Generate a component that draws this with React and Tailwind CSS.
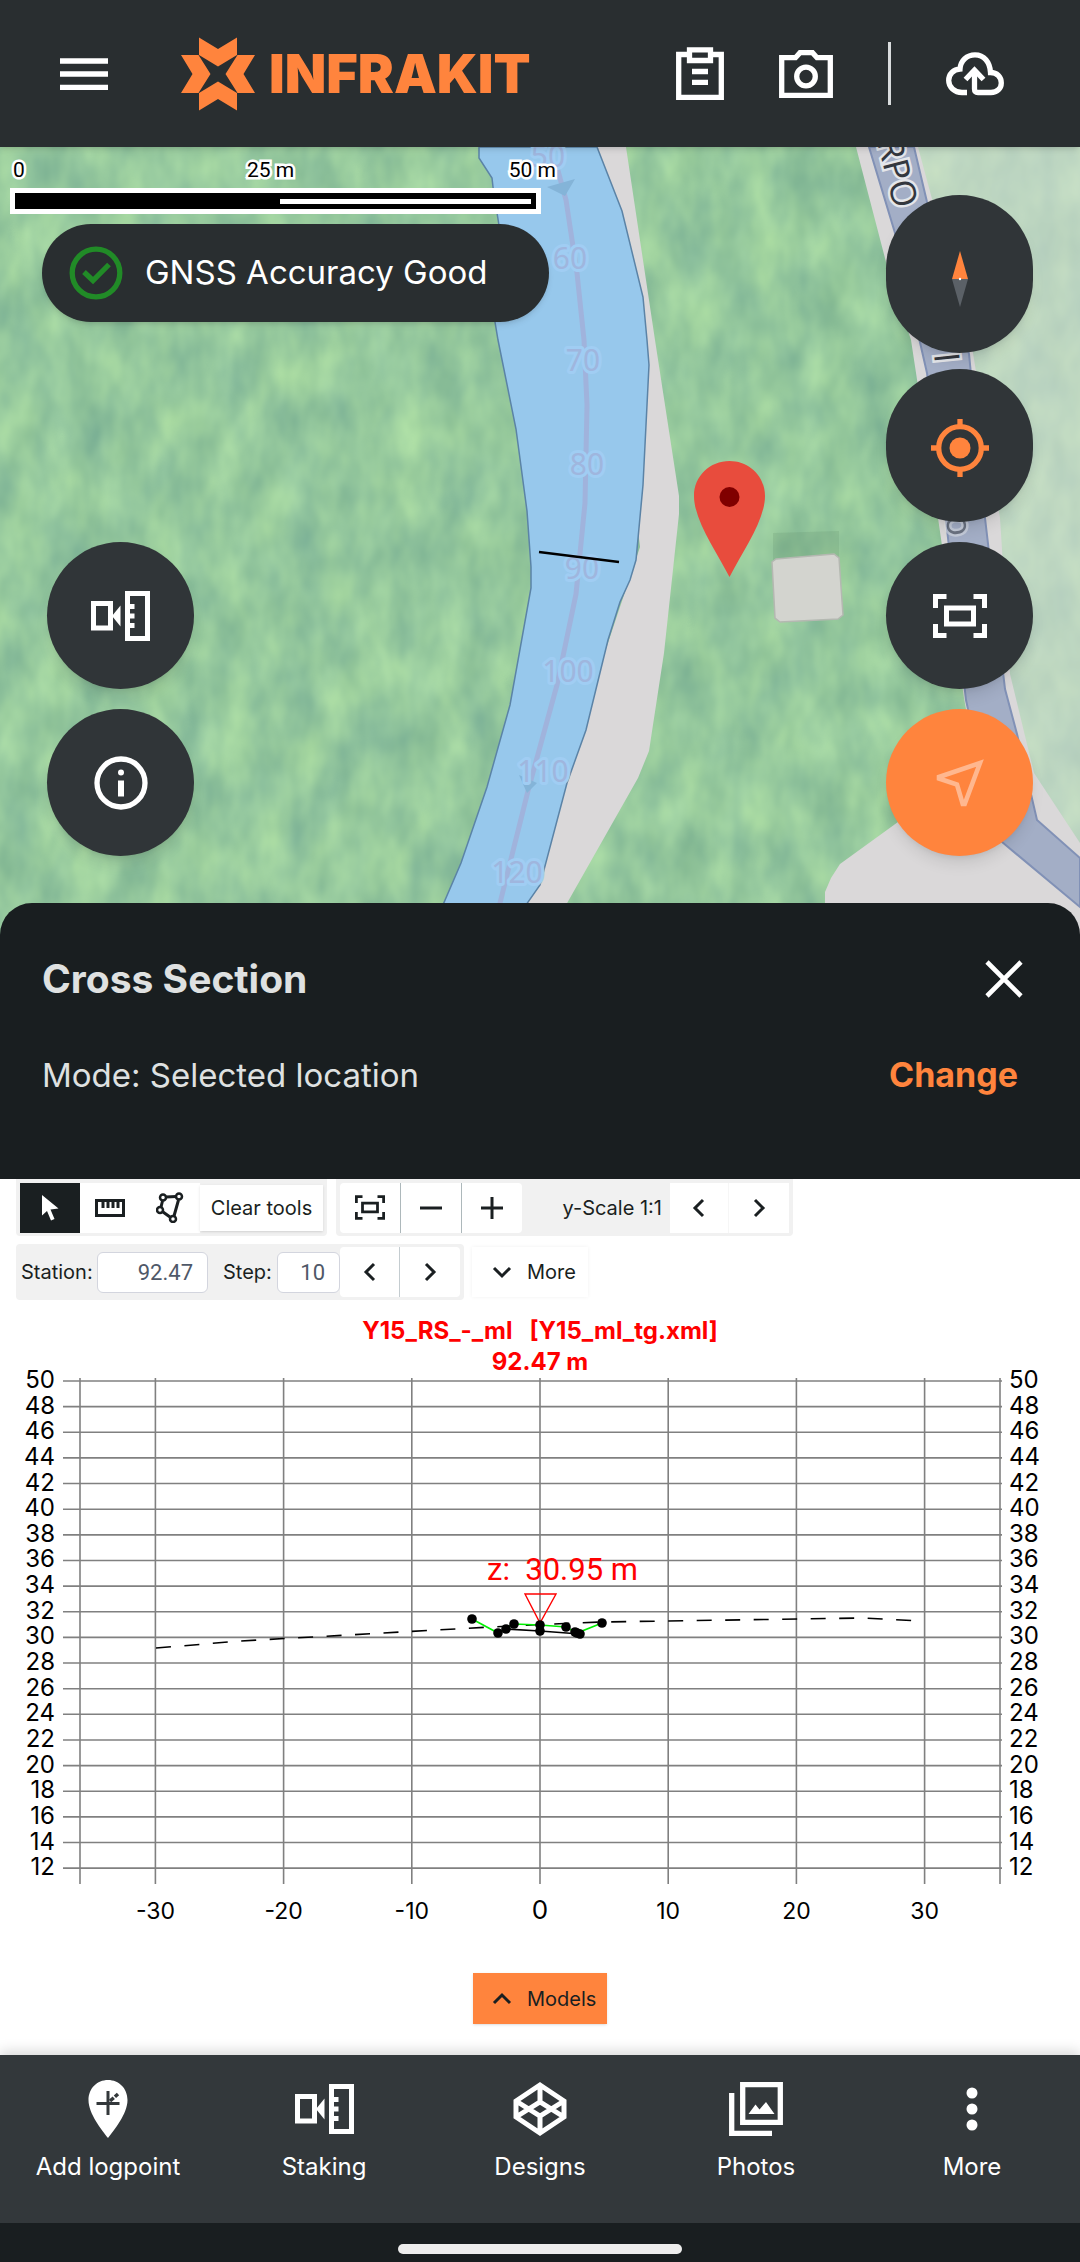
import { useState } from "react";

const NAV_ITEMS = [
  { label: "Add logpoint", icon: LogpointIcon },
  { label: "Staking", icon: StakingIcon },
  { label: "Designs", icon: DesignsIcon },
  { label: "Photos", icon: PhotosIcon },
  { label: "More", icon: DotsIcon },
];

const STATION_LABELS = [
  { x: 548, y: 20, text: "50" },
  { x: 570, y: 122, text: "60" },
  { x: 583, y: 224, text: "70" },
  { x: 587, y: 328, text: "80" },
  { x: 582, y: 432, text: "90" },
  { x: 568, y: 535, text: "100" },
  { x: 543, y: 635, text: "110" },
  { x: 517, y: 736, text: "120" },
];

const LEVELS = Array.from({ length: 20 }, (_, i) => 50 - i * 2);
const OFFSETS = [-30, -20, -10, 0, 10, 20, 30];

const SURFACE = [
  [472, 242], [498, 256], [514, 247], [540, 248], [566, 250], [577, 256], [602, 246],
];
const NODES = [...SURFACE, [506, 252], [540, 254], [575, 255], [580, 257]];

const chartX = (v) => 540 + v * 12.82;
const chartY = (v) => 4 + (50 - v) * 12.82;

function Logo() {
  return (
    <svg width="74" height="74" viewBox="0 0 74 74" fill="#ff843d" aria-hidden="true">
      <path d="M18 0.500 37 12 56 0.500V18L37 29.500 18 18Z" />
      <path d="M18 73.500 37 62 56 73.500V56L37 44.500 18 56Z" />
      <path d="M0 18H17.500L29.500 37 17.500 56H0L11.500 37Z" />
      <path d="M74 18H56.500L44.500 37 56.500 56H74L62.500 37Z" />
    </svg>
  );
}

function MenuIcon() {
  return (
    <svg width="48" height="32" viewBox="0 0 48 32" stroke="#fff" strokeWidth="5.500">
      <path d="M0 3H48M0 16H48M0 29.500H48" />
    </svg>
  );
}

function ClipboardIcon() {
  return (
    <svg width="48" height="54" viewBox="0 0 48 54" fill="none" stroke="#fff" strokeWidth="5.300">
      <path d="M11 7.500H2.700V50.300H45.300V7.500H37M13.500 2.800H34.500V13.500H13.500ZM16 24.500H32M16 35.300H32" />
    </svg>
  );
}

function CameraIcon() {
  return (
    <svg width="54" height="48" viewBox="0 0 54 48" fill="none" stroke="#fff" strokeWidth="5.300">
      <path d="M2.700 7.700H16.500L21 2.700H33.500L38 7.700H51.300V45.300H2.700Z" />
      <circle cx="27" cy="26.500" r="9.300" />
    </svg>
  );
}

function CloudUploadIcon() {
  return (
    <svg width="58" height="44" viewBox="0 0 58 44" fill="none" stroke="#fff" strokeWidth="5.300">
      <path d="M21 40.500H16C8.500 40.500 2.700 35 2.700 28.500C2.700 22 7.500 17.500 14 17C14.500 8.500 21 2.800 29 2.800C38 2.800 44 10 44.500 20.500C51 20.500 55.300 25 55.300 31C55.300 36.500 51 40.500 45 40.500H32Q28.500 40.500 28.500 37V18" />
      <path d="M19.500 27.500 28.500 18 37.500 27.500" />
    </svg>
  );
}

function StakingIcon() {
  return (
    <svg width="59" height="50" viewBox="0 0 59 50" fill="none" stroke="#fff" strokeWidth="5">
      <path d="M2.500 12.500H19.500V37H2.500Z" />
      <path d="M21 25 29.500 14.500V35.500Z" fill="#fff" stroke="none" />
      <path d="M36.500 2.500H56.500V47.500H36.500ZM38 15.500H43.500M38 25H43.500M38 34.500H43.500" />
    </svg>
  );
}

function InfoIcon() {
  return (
    <svg width="54" height="54" viewBox="0 0 54 54" fill="none" stroke="#fff">
      <circle cx="27" cy="27" r="24" strokeWidth="5.300" />
      <path d="M27 24.500V40.500" strokeWidth="6" />
      <circle cx="27" cy="16.500" r="3" fill="#fff" stroke="none" />
    </svg>
  );
}

function CompassIcon() {
  return (
    <svg width="16" height="56" viewBox="0 0 16 56" aria-hidden="true">
      <path d="M8 0 16 28H0Z" fill="#ff843d" />
      <path d="M0 28H16L8 56Z" fill="#5b6167" />
      <circle cx="8" cy="28" r="1.200" fill="#fff" />
    </svg>
  );
}

function TargetIcon() {
  return (
    <svg width="58" height="58" viewBox="0 0 58 58" fill="none" stroke="#ff843d" strokeWidth="5.300">
      <circle cx="29" cy="29" r="21.300" />
      <circle cx="29" cy="29" r="10.500" fill="#ff843d" stroke="none" />
      <path d="M29 0V8M29 50V58M0 29H8M50 29H58" />
    </svg>
  );
}

function FitIcon({ width, height, color }) {
  return (
    <svg width={width} height={height} viewBox="0 0 54 44" fill="none" stroke={color} strokeWidth="5">
      <path d="M2.500 14V2.500H13.500M40.500 2.500H51.500V14M51.500 30V41.500H40.500M13.500 41.500H2.500V30M13.500 14H40.500V30H13.500Z" />
    </svg>
  );
}

function LocateIcon() {
  return (
    <svg width="48" height="48" viewBox="0 0 48 48" fill="none" stroke="#ffb78f" strokeWidth="4.600">
      <path d="M44 4 28.700 45H26.700L21 25.500 3 19.500V18Z" />
    </svg>
  );
}

function LogpointIcon() {
  return (
    <svg width="40" height="60" viewBox="0 0 40 60">
      <path d="M20 1C31 1 39.500 9.500 39.500 21C39.500 35 26 51 20 59C14 51 0.500 35 0.500 21C0.500 9.500 9 1 20 1Z" fill="#fff" />
      <path d="M20 12V36M8.500 24.500H31.500" stroke="#33383b" strokeWidth="3" />
      <path d="M22 22 30 15" stroke="#33383b" strokeWidth="3.500" strokeDasharray="5 1.500" />
    </svg>
  );
}

function DesignsIcon() {
  return (
    <svg width="54" height="56" viewBox="0 0 54 56" fill="none" stroke="#fff" strokeWidth="5">
      <path d="M27 4 51 20V36L27 52 3 36V20ZM27 4V21M27 35V52M3 20 27 35 51 20M3 36 27 21 51 36" />
    </svg>
  );
}

function PhotosIcon() {
  return (
    <svg width="54" height="54" viewBox="0 0 54 54" fill="none" stroke="#fff" strokeWidth="5.300">
      <path d="M13.700 2.700H51.300V40.300H13.700ZM2.700 11V51.300H43" />
      <path d="M19.500 32 26.500 22.500 30.500 27.500 37 20 45.500 32Z" fill="#fff" stroke="none" />
    </svg>
  );
}

function DotsIcon() {
  return (
    <svg width="12" height="44" viewBox="0 0 12 44" fill="#fff">
      <circle cx="6" cy="6" r="5.500" />
      <circle cx="6" cy="22" r="5.500" />
      <circle cx="6" cy="38" r="5.500" />
    </svg>
  );
}

function Chevron({ d }) {
  return (
    <svg width="20" height="20" viewBox="0 0 20 20" fill="none" stroke="#1a1f21" strokeWidth="3">
      <path d={d} />
    </svg>
  );
}

const LEFT = "M14 2 6 10 14 18";
const RIGHT = "M6 2 14 10 6 18";
const DOWN = "M2 6 10 14 18 6";
const UP = "M2 14 10 6 18 14";

function MapCanvas() {
  return (
    <svg
      className="absolute inset-0 h-full w-full"
      viewBox="0 0 1080 788"
      preserveAspectRatio="xMidYMin slice"
      aria-label="Map"
    >
      <defs>
        <filter id="forest" x="0" y="0" width="100%" height="100%" colorInterpolationFilters="sRGB">
          <feTurbulence type="fractalNoise" baseFrequency="0.028 0.016" numOctaves="3" seed="11" />
          <feColorMatrix values="0.24 0 0 0 0.465  0.22 0 0 0 0.675  0.09 0.04 0 0 0.55  0 0 0 0 1" />
        </filter>
        <path id="street" d="M876 -9 903 95" />
      </defs>
      <rect width="1080" height="788" filter="url(#forest)" />

      {/* paler ground east of the road */}
      <path d="M900 0H1080V788L1037 673 1005 542 985 371 969 207 927 55Z" fill="#dfe2df" opacity="0.55" />

      {/* verges */}
      <g fill="#dad8d9">
        <path d="M590 0H626L655 193 679 349V367L664 506 649 604 638 631 566 758 548 788H480L560 640 640 400Z" />
        <path d="M856 0H918L972 200 1000 371 1010 527 1034 626 1080 696V788H825V745L831 731 840 717 898 675 980 640 964 551 938 371 911 193 886 115Z" />
      </g>

      <path
        d="M869 0H914L927 55 969 207 985 371 1005 542 1017 587 1037 673 1080 711V760L1002 695 985 640 966 553 946 373 927 226 895 86Z"
        fill="#a3aec6"
        stroke="#8191b6"
        strokeWidth="2"
      />
      <g
        fontFamily="'Open Sans', sans-serif"
        fontSize="35"
        fontWeight="500"
        fill="#33373e"
        stroke="#e4e6ea"
        strokeWidth="5"
        paintOrder="stroke"
      >
        <text>
          <textPath href="#street" startOffset="4">RPO</textPath>
        </text>
        <text transform="translate(934 207) rotate(84)">I</text>
        <text transform="translate(946 369) rotate(84)" opacity="0.5">o</text>
      </g>

      {/* river */}
      <path
        d="M479 0V11L492 31 493 40 500 85V140L495 175 498 193 516 282 527 364 531 420V441L510 558 487 640 461 716 430 788H505L540 738 567 636 586 583 608 493 620 455 630 433 636 413 643 338 649 218 647 193 643 150 622 64 597 0Z"
        fill="#97c8ec"
        stroke="#5b83a6"
        strokeWidth="1.500"
      />
      <path d="M557 20 566 53 577 126 584 193 587 258 585 356 576 447 557 538 529 640 492 788" fill="none" stroke="#a0b3dc" strokeWidth="5" />
      <path d="M547 40 575 32 565 49ZM519 628 537 636 527 646Z" fill="#84b4d8" />
      <g
        fontFamily="'Noto Sans', sans-serif"
        fontSize="30"
        fill="#9fb6de"
        stroke="#a0cdf3"
        strokeWidth="6"
        strokeLinejoin="round"
        paintOrder="stroke"
        textAnchor="middle"
      >
        {STATION_LABELS.map((s) => (
          <text key={s.text} x={s.x} y={s.y}>
            {s.text}
          </text>
        ))}
      </g>
      <path d="M539 405 619 415" stroke="#000" strokeWidth="2.500" />

      {/* building and its shadow */}
      <path d="M773 386 839 384V420H773Z" fill="#5d8a68" opacity="0.2" />
      <path d="M776 412 834 407 839 411 843 468 838 472 780 475 775 471 772 415Z" fill="#d3d4cf" stroke="#b4b8b1" strokeWidth="1.500" />

      {/* selected location */}
      <path d="M729.500 314C710 314 694 329 694 349C694 373 716 404 729.500 430C743 404 765 373 765 349C765 329 749 314 729.500 314Z" fill="#e84c3d" />
      <circle cx="729.500" cy="350" r="10" fill="#800000" />
    </svg>
  );
}

function ScaleBar() {
  return (
    <div className="absolute left-[10px] top-[9px] w-[546px]">
      <div className="flex pb-1 pl-[3px] font-[Roboto,sans-serif] text-[21px] leading-7 text-black [-webkit-text-stroke:5px_white] [paint-order:stroke_fill]">
        <span className="w-[234px]">0</span>
        <span>25 m</span>
        <span className="ml-auto">50 m</span>
      </div>
      <div className="w-[531px] bg-white p-[5px]">
        <div className="flex h-4 items-center justify-end bg-black pr-[5px]">
          <div className="h-[5px] w-[251px] bg-white" />
        </div>
      </div>
    </div>
  );
}

function RoundButton({ label, className, children }) {
  return (
    <button
      aria-label={label}
      className={`flex w-[147px] items-center justify-center rounded-full shadow-lg ${className}`}
    >
      {children}
    </button>
  );
}

function ToolButton({ label, className = "", children }) {
  return (
    <button aria-label={label} className={`flex h-[50px] items-center justify-center ${className}`}>
      {children}
    </button>
  );
}

function Toolbar() {
  const [station, setStation] = useState("92.47");
  const [step, setStep] = useState("10");

  return (
    <div className="flex flex-col gap-2 px-4 text-xl text-[#1a1f21]">
      <div className="flex gap-[9px]">
        <div className="flex h-[57px] w-[311px] items-center rounded-b bg-[#f1f1f1] px-1">
          <ToolButton label="Select" className="w-[60px] bg-[#1a1f21]">
            <svg width="18" height="26" viewBox="0 0 18 26" fill="#fff">
              <path d="M1 0V20.500L6 16 10 25.500 13.500 24 9.500 14.500 17.500 13.500Z" />
            </svg>
          </ToolButton>
          <ToolButton label="Measure" className="w-[60px] bg-white">
            <svg width="30" height="18" viewBox="0 0 30 18" fill="none" stroke="#1a1f21" strokeWidth="3">
              <path d="M1.500 1.500H28.500V16.500H1.500ZM8 2V9M13 2V9M18 2V9M23 2V9" />
            </svg>
          </ToolButton>
          <ToolButton label="Area" className="w-[60px] bg-white">
            <svg width="28" height="31" viewBox="0 0 28 31" fill="none" stroke="#1a1f21" strokeWidth="2.500">
              <path d="M10 5 20 4.500M6.500 9 5 15M7 20 14 25M22.500 8 18 24" strokeWidth="3" />
              <circle cx="7" cy="5.500" r="3" />
              <circle cx="23" cy="4.500" r="3" />
              <circle cx="4" cy="18" r="3" />
              <circle cx="17" cy="27" r="3" />
            </svg>
          </ToolButton>
          <button className="h-[46px] flex-1 bg-white shadow-sm">Clear tools</button>
        </div>
        <div className="flex h-[57px] w-[457px] items-center rounded-b bg-[#f1f1f1] px-1">
          <ToolButton label="Fit view" className="w-[60px] rounded-l-sm bg-white">
            <FitIcon width={30} height={25} color="#1a1f21" />
          </ToolButton>
          <ToolButton label="Zoom out" className="w-[61px] border-l border-[#adb8bb] bg-white">
            <svg width="22" height="22" viewBox="0 0 22 22" stroke="#1a1f21" strokeWidth="3">
              <path d="M0 11H22" />
            </svg>
          </ToolButton>
          <ToolButton label="Zoom in" className="w-[61px] rounded-r-sm border-l border-[#adb8bb] bg-white">
            <svg width="22" height="22" viewBox="0 0 22 22" stroke="#1a1f21" strokeWidth="3">
              <path d="M0 11H22M11 0V22" />
            </svg>
          </ToolButton>
          <span className="flex-1 pr-2 text-right">y-Scale 1:1</span>
          <ToolButton label="Decrease scale" className="w-[58px] bg-white">
            <Chevron d={LEFT} />
          </ToolButton>
          <ToolButton label="Increase scale" className="w-[61px] border-l border-[#f6f6f6] bg-white">
            <Chevron d={RIGHT} />
          </ToolButton>
        </div>
      </div>

      <div className="flex items-center gap-2">
        <div className="flex h-14 w-[448px] items-center rounded bg-[#f1f1f1] pl-[5px] pr-1">
          <label htmlFor="station" className="w-[76px]">Station:</label>
          <input
            id="station"
            value={station}
            onChange={(e) => setStation(e.target.value)}
            className="h-[41px] w-[111px] rounded-md border border-[#d3d5de] bg-white pr-[14px] text-right font-[Roboto,sans-serif] text-[22px] text-[#4f5868]"
          />
          <label htmlFor="step" className="ml-[15px] w-[54px]">Step:</label>
          <input
            id="step"
            value={step}
            onChange={(e) => setStep(e.target.value)}
            className="h-[41px] w-[63px] rounded-md border border-[#d3d5de] bg-white pr-[14px] text-right font-[Roboto,sans-serif] text-[22px] text-[#4f5868]"
          />
          <ToolButton label="Previous station" className="w-[59px] rounded-l-sm bg-white">
            <Chevron d={LEFT} />
          </ToolButton>
          <ToolButton label="Next station" className="flex-1 rounded-r-sm border-l border-[#c4ccd0] bg-white">
            <Chevron d={RIGHT} />
          </ToolButton>
        </div>
        <button className="flex h-[50px] items-center gap-[15px] bg-white pl-5 pr-3 shadow-[0_0_4px_rgba(0,0,0,0.06)]">
          <Chevron d={DOWN} />
          More
        </button>
      </div>
    </div>
  );
}

function SectionChart() {
  return (
    <svg viewBox="0 0 1080 553" className="block w-full overflow-visible" aria-label="Cross section chart">
      <g stroke="#808080" strokeWidth="1.600">
        {LEVELS.map((v) => (
          <line key={v} x1="63" x2="1002" y1={chartY(v)} y2={chartY(v)} />
        ))}
        {[80, ...OFFSETS.map(chartX), 1000].map((x) => (
          <line key={x} x1={x} x2={x} y1="1" y2="507" />
        ))}
      </g>

      <g fontSize="24" fill="#000">
        {LEVELS.map((v) => (
          <g key={v}>
            <text x="55" y={chartY(v) + 7} textAnchor="end">{v}</text>
            <text x="1009" y={chartY(v) + 7}>{v}</text>
          </g>
        ))}
        {OFFSETS.map((v) => (
          <text key={v} x={chartX(v)} y="542" textAnchor="middle" fontSize={v === 0 ? 26 : 23}>
            {v}
          </text>
        ))}
      </g>

      <path
        d="M156 271 205 267 233 264.500 284 261.500 349 258 400 255 491 250 540 247.500 602 245 862 241 920 244"
        fill="none"
        stroke="#000"
        strokeWidth="1.600"
        strokeDasharray="15 13.500"
      />
      <path d="M506 252 540 254 580 257" fill="none" stroke="#000" strokeWidth="1.600" />
      <polyline points={SURFACE.join(" ")} fill="none" stroke="#00f000" strokeWidth="1.600" />
      <path d="M525 217H556L540 246Z" fill="none" stroke="#f00" strokeWidth="1.400" />
      {NODES.map(([x, y]) => (
        <circle key={`${x}-${y}`} cx={x} cy={y} r="4.800" />
      ))}
      <text x="487" y="203" fontFamily="Roboto, sans-serif" fontSize="31" fill="#f00" className="whitespace-pre">
        {"z:  30.95 m"}
      </text>
    </svg>
  );
}

export default function App() {
  return (
    <div className="flex min-h-screen flex-col bg-white font-[Inter,sans-serif]">
      <header className="relative z-10 flex h-[147px] items-center bg-[#292e30] pl-[60px] pr-[76px] shadow-md">
        <button aria-label="Menu">
          <MenuIcon />
        </button>
        <div className="ml-[73px] flex items-center gap-[14px]">
          <Logo />
          <span className="text-[54px] font-black leading-none text-[#ff843d]">INFRAKIT</span>
        </div>
        <div className="ml-auto flex items-center gap-[55px]">
          <button aria-label="Tasks"><ClipboardIcon /></button>
          <button aria-label="Camera"><CameraIcon /></button>
          <div className="h-[63px] w-[3px] bg-[#d9dcdd]" />
          <button aria-label="Upload"><CloudUploadIcon /></button>
        </div>
      </header>

      <section className="relative h-[788px] overflow-hidden">
        <MapCanvas />
        <ScaleBar />

        <div className="absolute left-[42px] top-[77px] flex h-[98px] w-[507px] items-center gap-[22px] rounded-full bg-[#292e30] pl-[27px] text-[33px] text-white shadow-md">
          <svg width="54" height="54" viewBox="0 0 54 54" fill="none" stroke="#218b27" strokeWidth="5.300">
            <circle cx="27" cy="27" r="23.800" />
            <path d="M15 26 24 34.500 40 18.500" />
          </svg>
          GNSS Accuracy Good
        </div>

        <div className="absolute bottom-[79px] left-[47px] flex flex-col gap-5">
          <RoundButton label="Staking" className="h-[147px] bg-[#303538]"><StakingIcon /></RoundButton>
          <RoundButton label="Info" className="h-[147px] bg-[#303538]"><InfoIcon /></RoundButton>
        </div>

        <div className="absolute bottom-[79px] right-[47px] flex flex-col gap-5">
          <div className="flex flex-col gap-4">
            <RoundButton label="Compass" className="h-[158px] bg-[#303538] pt-2.5"><CompassIcon /></RoundButton>
            <RoundButton label="My position" className="h-[153px] bg-[#303538] pt-1"><TargetIcon /></RoundButton>
          </div>
          <RoundButton label="Fit map" className="h-[147px] bg-[#303538]">
            <FitIcon width={54} height={44} color="#fff" />
          </RoundButton>
          <RoundButton label="Navigate" className="h-[147px] bg-[#ff843d]"><LocateIcon /></RoundButton>
        </div>
      </section>

      <section className="relative -mt-8 h-[276px] rounded-t-[32px] bg-[#191e20] px-[42px] pt-[50px] text-[#dfe1e1]">
        <div className="flex h-[52px] items-center justify-between">
          <h2 className="text-[39px] font-bold">Cross Section</h2>
          <button aria-label="Close" className="mr-[15px]">
            <svg width="38" height="38" viewBox="0 0 38 38" stroke="#fff" strokeWidth="4.600">
              <path d="M2 2 36 36M36 2 2 36" />
            </svg>
          </button>
        </div>
        <div className="mt-[45px] flex items-center justify-between text-[33px] leading-[50px]">
          <p>Mode: Selected location</p>
          <button className="mr-[20px] text-[34px] font-bold text-[#ff843d]">Change</button>
        </div>
      </section>

      <main className="flex-1">
        <Toolbar />
        <h3 className="mt-[15px] whitespace-pre text-center text-2xl font-bold leading-[31px] text-[#f00]">
          {"Y15_RS_-_ml   [Y15_ml_tg.xml]\n92.47 m"}
        </h3>
        <SectionChart />
        <div className="flex justify-center pb-[31px] pt-[43px]">
          <button className="flex h-[51px] w-[134px] items-center gap-[15px] bg-[#ff843d] pl-[19px] text-xl text-[#1a1f21] shadow-sm">
            <Chevron d={UP} />
            Models
          </button>
        </div>
      </main>

      <nav className="grid h-[168px] grid-cols-5 bg-[#33383b] text-white shadow-[0_-4px_12px_rgba(0,0,0,0.15)]">
        {NAV_ITEMS.map(({ label, icon: Icon }) => (
          <a key={label} href="#" className="flex flex-col items-center pt-6 text-2xl leading-9">
            <span className="flex h-[60px] items-center">
              <Icon />
            </span>
            <span className="mt-2.5">{label}</span>
          </a>
        ))}
      </nav>
      <div className="flex h-[39px] justify-center bg-[#191e20] pt-[21px]">
        <div className="h-2.5 w-[284px] rounded-full bg-[#ededed]" />
      </div>
    </div>
  );
}
